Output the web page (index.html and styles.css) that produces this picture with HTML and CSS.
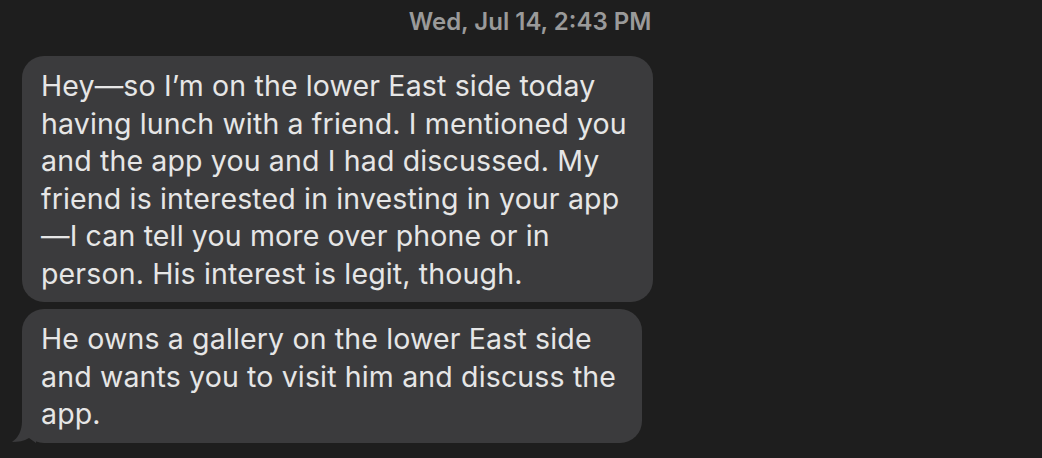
FILE: index.html
```html
<!DOCTYPE html>
<html>
<head>
<meta charset="utf-8">
<link rel="stylesheet" href="styles.css">
</head>
<body>
<div class="thread">
  <div class="stamp">Wed, Jul 14, 2:43 PM</div>
  <div class="bubble">Hey—so I’m on the lower East side today<br>having lunch with a friend. I mentioned you<br>and the app you and I had discussed. My<br>friend is interested in investing in your app<br>—I can tell you more over phone or in<br>person. His interest is legit, though.</div>
  <div class="bubble last">He owns a gallery on the lower East side<br>and wants you to visit him and discuss the<br>app.<svg class="tail" width="24" height="22" viewBox="0 0 24 22"><path d="M10 0 C10 10 6 17 0 21 C6 21 12 20 17 17 L24 22 L24 0 Z" fill="#3b3b3d"/></svg></div>
</div>
</body>
</html>
```
FILE: styles.css
```css
html, body {
  margin: 0;
  padding: 0;
  background: #1e1e1e;
}
body {
  width: 1042px;
  height: 458px;
  overflow: hidden;
  font-family: Inter, "Noto Sans", sans-serif;
}
.thread {
  display: flex;
  flex-direction: column;
  align-items: flex-start;
  padding: 5px 0 0 22px;
}
.stamp {
  align-self: stretch;
  text-align: center;
  margin-left: -4px;
  color: #9a9a9a;
  font-size: 24px;
  font-weight: 600;
  line-height: 34px;
}
.bubble {
  position: relative;
  background: #3b3b3d;
  color: #e6e6e6;
  font-size: 28.5px;
  letter-spacing: 0.15px;
  line-height: 37.5px;
  border-radius: 22px;
  padding: 11px 26px 10px 19px;
  white-space: nowrap;
  margin-top: 17px;
}
.bubble.last {
  margin-top: 7px;
}
.tail {
  position: absolute;
  left: -10px;
  bottom: 0;
}
```
